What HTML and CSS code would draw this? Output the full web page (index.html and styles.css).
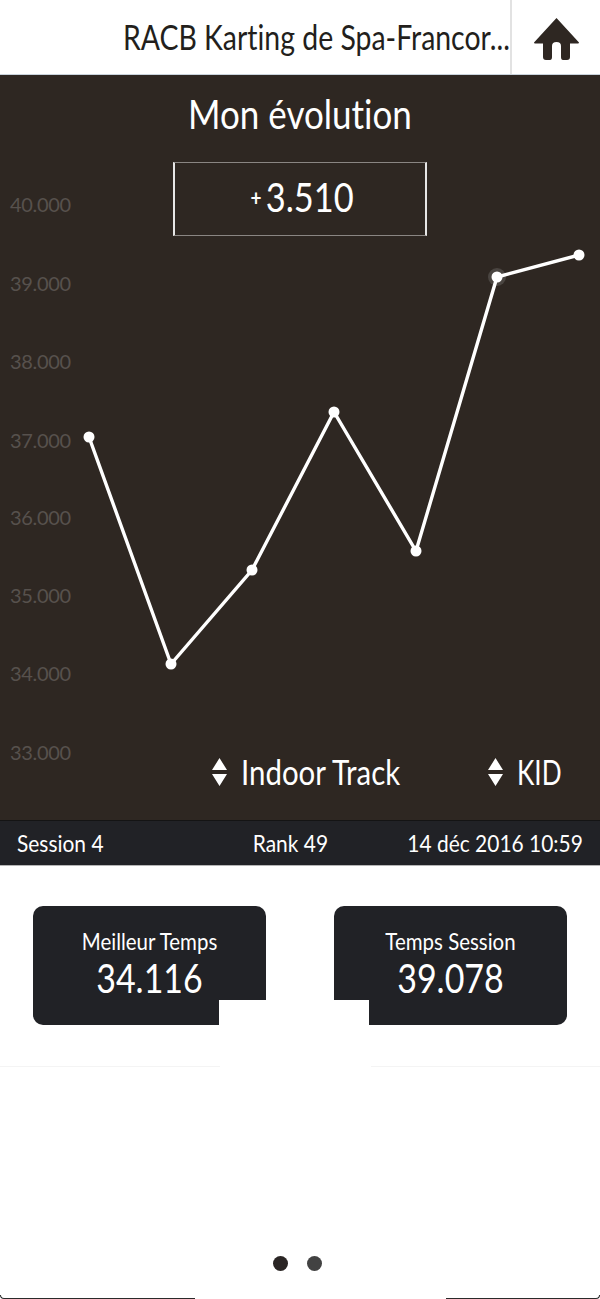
FILE: index.html
```html
<!DOCTYPE html>
<html lang="fr">
<head>
<meta charset="utf-8">
<title>Mon évolution</title>
<link rel="stylesheet" href="styles.css">
</head>
<body>
<div class="page">
  <header class="topbar">
    <h1 class="venue">RACB Karting de Spa-Francor...</h1>
    <a class="home" aria-label="Accueil">
      <svg class="home-icon" viewBox="0 0 45 42"><path d="M22.5 0 L45 24.5 Q45 25.5 44 25.5 H36 V39 Q36 42 33 42 H29 Q27 42 27 39 V28 Q27 24 22.5 24 Q18 24 18 28 V39 Q18 42 16 42 H12 Q9 42 9 39 V25.5 H1 Q0 25.5 0 24.5 Z"/></svg>
    </a>
  </header>
  <section class="panel">
    <svg class="chart" viewBox="0 0 600 745" aria-hidden="true">
      <g class="axis">
        <text x="10" y="137">40.000</text>
        <text x="10" y="216">39.000</text>
        <text x="10" y="294">38.000</text>
        <text x="10" y="373">37.000</text>
        <text x="10" y="450">36.000</text>
        <text x="10" y="528">35.000</text>
        <text x="10" y="606">34.000</text>
        <text x="10" y="685">33.000</text>
      </g>
      <circle class="halo" cx="497" cy="202" r="9"/>
      <polyline class="line" points="89,362 171,589 252,495 334,337 416,476 497,202 579,180"/>
      <g class="dots">
        <circle cx="89" cy="362" r="5.5"/><circle cx="171" cy="589" r="5.5"/><circle cx="252" cy="495" r="5.5"/><circle cx="334" cy="337" r="5.5"/><circle cx="416" cy="476" r="5.5"/><circle cx="497" cy="202" r="5.5"/><circle cx="579" cy="180" r="5.5"/>
      </g>
    </svg>
    <h2 class="title">Mon évolution</h2>
    <div class="delta"><span class="delta-text"><span class="plus">+</span>3.510</span></div>
    <div class="filters">
      <div class="filter filter-track"><svg class="updown" viewBox="0 0 15 28"><path d="M7.5 0 L15 12 H0 Z M0 16 H15 L7.5 28 Z"/></svg><span class="filter-name">Indoor Track</span></div>
      <div class="filter"><svg class="updown" viewBox="0 0 15 28"><path d="M7.5 0 L15 12 H0 Z M0 16 H15 L7.5 28 Z"/></svg><span class="filter-name filter-name-short">KID</span></div>
    </div>
  </section>
  <div class="infobar">
    <span class="info info-start">Session 4</span>
    <span class="info rank">Rank 49</span>
    <span class="info info-end">14 déc 2016 10:59</span>
  </div>
  <section class="cards">
    <div class="card">
      <div class="card-label">Meilleur Temps</div>
      <div class="card-value">34.116</div>
      <div class="notch notch-right"></div>
    </div>
    <div class="card">
      <div class="card-label">Temps Session</div>
      <div class="card-value">39.078</div>
      <div class="notch notch-left"></div>
    </div>
  </section>
  <div class="rule"><span class="rule-left"></span><span class="rule-right"></span></div>
  <div class="pager"><span class="pip pip-on"></span><span class="pip"></span></div>
  <div class="edge"><span class="edge-left"></span><span class="edge-right"></span></div>
</div>
</body>
</html>
```
FILE: styles.css
```css
* { box-sizing: border-box; }
html, body { margin: 0; padding: 0; background: #fff; }
body { font-family: Lato, Roboto, sans-serif; font-variant-ligatures: none; }
.page { width: 600px; height: 1299px; display: flex; flex-direction: column; overflow: hidden; }

.topbar { height: 75px; flex: none; display: flex; justify-content: flex-end; background: #fff; border-bottom: 1px solid #c9d3dc; }
.venue { margin: 0 0 2px; align-self: center; font-size: 34px; font-weight: 400; color: #231f1c; white-space: nowrap; transform: scaleX(0.836); transform-origin: right center; }
.home { width: 90px; flex: none; border-left: 2px solid #e2e2e2; display: flex; align-items: center; justify-content: center; }
.home-icon { width: 45px; height: 42px; fill: #2e2722; margin-top: 4px; }

.panel { position: relative; height: 745px; flex: none; background: #2e2722; color: #fff; display: flex; flex-direction: column; align-items: center; }
.chart { position: absolute; left: 0; top: 0; width: 600px; height: 745px; }
.axis text { font-size: 20px; letter-spacing: -0.3px; fill: #57514d; }
.line { fill: none; stroke: #fff; stroke-width: 3.4; }
.dots circle { fill: #fff; }
.halo { fill: #4a4541; }
.title { position: relative; margin: 17px 0 0; font-size: 40px; font-weight: 400; line-height: 44px; transform: scaleX(0.875); }
.delta { position: relative; margin-top: 26px; width: 254px; height: 74px; border: 1px solid #8a8683; border-left: 2px solid #e6e6e6; border-right: 2px solid #e6e6e6; display: flex; align-items: center; justify-content: center; font-size: 40px; padding: 0 0 5px 5px; }
.delta-text { transform: scaleX(0.86); }
.plus { font-size: 22px; font-weight: 700; margin-right: 5px; vertical-align: 6px; }
.filters { position: relative; margin-top: auto; margin-bottom: 28px; width: 100%; display: flex; padding-left: 212px; font-size: 34px; line-height: 40px; }
.filter { display: flex; align-items: center; gap: 14px; }
.filter-track { width: 276px; }
.filter-name { transform: scaleX(0.865); transform-origin: left center; white-space: nowrap; }
.filter-name-short { transform: scaleX(0.77); }
.updown { width: 15px; height: 28px; fill: #fff; }

.infobar { height: 46px; flex: none; background: #212226; color: #fff; border-top: 1px solid #141414; border-bottom: 1px solid #b5b5b5; display: flex; align-items: center; justify-content: space-between; padding: 0 17px; font-size: 23px; }
.info { transform: scaleX(0.91); white-space: nowrap; }
.info-start { transform-origin: left center; }
.info-end { transform-origin: right center; }
.rank { margin-left: 78px; }

.cards { height: 200px; flex: none; display: flex; justify-content: space-between; padding: 40px 33px 0; }
.card { position: relative; width: 233px; height: 119px; background: #212226; border-radius: 10px; color: #fff; text-align: center; padding-top: 21px; }
.card-label { font-size: 23px; line-height: 28px; transform: scaleX(0.89); }
.card-value { font-size: 40px; line-height: 46px; transform: scaleX(0.85); }
.notch { position: absolute; bottom: 0; height: 25px; background: #fff; }
.notch-right { right: 0; width: 47px; }
.notch-left { left: 0; width: 35px; }

.rule { height: 1px; flex: none; display: flex; justify-content: space-between; }
.rule-left { width: 220px; background: #f4f4f4; }
.rule-right { width: 229px; background: #f4f4f4; }

.pager { margin-top: auto; margin-bottom: 24px; display: flex; justify-content: center; gap: 19px; margin-right: 6px; }
.pip { width: 15px; height: 15px; border-radius: 50%; background: #424242; }
.pip-on { background: #2a2524; }

.edge { height: 4px; flex: none; display: flex; justify-content: space-between; }
.edge-left { width: 195px; border-left: 1px solid #2a2a2a; border-bottom: 1px solid #2a2a2a; border-bottom-left-radius: 4px; }
.edge-right { width: 154px; border-right: 1px solid #2a2a2a; border-bottom: 1px solid #2a2a2a; border-bottom-right-radius: 4px; }
```
